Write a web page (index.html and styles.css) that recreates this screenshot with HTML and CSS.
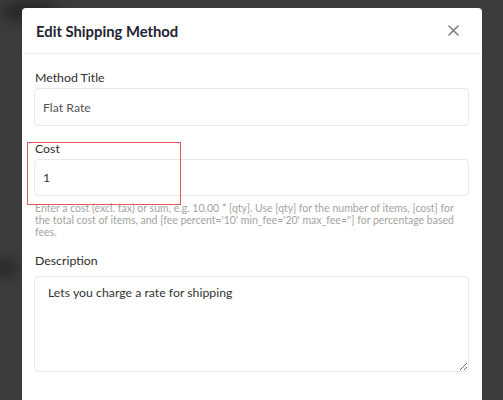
FILE: index.html
```html
<!DOCTYPE html>
<html lang="en">
<head>
<meta charset="utf-8">
<title>Edit Shipping Method</title>
<link rel="stylesheet" href="styles.css">
</head>
<body>
<div class="backdrop">
  <span class="blur blur-a"></span>
  <span class="blur blur-b"></span>
  <div class="modal">
    <div class="modal-header">
      <h2 class="modal-title">Edit Shipping Method</h2>
      <button class="close" aria-label="Close">
        <svg width="11" height="11" viewBox="0 0 11 11"><path d="M1 1L10 10M10 1L1 10" stroke="#7a7f87" stroke-width="1.6" stroke-linecap="round"/></svg>
      </button>
    </div>
    <div class="modal-body">
      <div class="field">
        <label class="label">Method Title</label>
        <input class="input" type="text" value="Flat Rate">
      </div>
      <div class="field field-cost">
        <label class="label">Cost</label>
        <input class="input input-cost" type="text" value="1">
        <p class="help">Enter a cost (excl. tax) or sum, e.g. 10.00 * [qty]. Use [qty] for the number of items, [cost] for the total cost of items, and [fee percent='10' min_fee='20' max_fee=''] for percentage based fees.</p>
        <span class="highlight"></span>
      </div>
      <div class="field">
        <label class="label label-desc">Description</label>
        <textarea class="textarea">Lets you charge a rate for shipping</textarea>
      </div>
    </div>
  </div>
</div>
</body>
</html>
```

FILE: styles.css
```css
html, body {
  margin: 0;
  padding: 0;
  height: 100%;
  overflow: hidden;
}
body {
  background: #3c3c3c;
  font-family: "Lato", "Noto Sans", sans-serif;
  color: #333;
}
.backdrop {
  position: relative;
  height: 100%;
  padding: 8px 0 0 22px;
  box-sizing: border-box;
}
.blur {
  position: absolute;
  background: #2a2a2a;
  filter: blur(6px);
  border-radius: 50%;
}
.blur-a { left: 0; top: 0; width: 60px; height: 24px; }
.blur-b { left: -6px; top: 258px; width: 24px; height: 20px; }
.modal {
  position: relative;
  width: 460px;
  height: 420px;
  background: #fff;
  border-radius: 4px 4px 0 0;
}
.modal-header {
  height: 45px;
  border-bottom: 1px solid #ececec;
  display: flex;
  align-items: center;
  justify-content: space-between;
  padding: 0 23px 0 14px;
}
.modal-title {
  margin: 0;
  font-size: 14.8px;
  font-weight: 700;
  color: #1f2430;
}
.close {
  border: 0;
  background: none;
  padding: 0;
  display: flex;
  margin-top: -1px;
}
.modal-body {
  padding: 15px 13px 0 12px;
}
.field {
  position: relative;
  margin-bottom: 14px;
}
.label {
  display: block;
  font-size: 12.3px;
  line-height: 18px;
  color: #2e2e2e;
  padding-left: 1px;
}
.input {
  display: block;
  width: 100%;
  box-sizing: border-box;
  height: 38px;
  margin-top: 1px;
  border: 1px solid #e9e9e9;
  border-radius: 4px;
  padding: 0 8px;
  font-family: inherit;
  font-size: 12.3px;
  color: #555;
  background: #fff;
}
.input-cost { height: 37px; color: #333; }
.help {
  margin: 6px 0 0 1px;
  font-size: 10.5px;
  line-height: 12px;
  color: #a3a3a3;
}
.highlight {
  position: absolute;
  left: -7px;
  top: 2px;
  width: 152px;
  height: 61px;
  border: 1.5px solid #e4555a;
}
.label-desc { margin-top: 3px; }
.textarea {
  display: block;
  width: 100%;
  box-sizing: border-box;
  height: 96px;
  margin-top: 6px;
  border: 1px solid #e9e9e9;
  border-radius: 4px;
  padding: 7px 13px;
  font-family: inherit;
  font-size: 12.3px;
  line-height: 18px;
  color: #333;
  resize: vertical;
}
```
